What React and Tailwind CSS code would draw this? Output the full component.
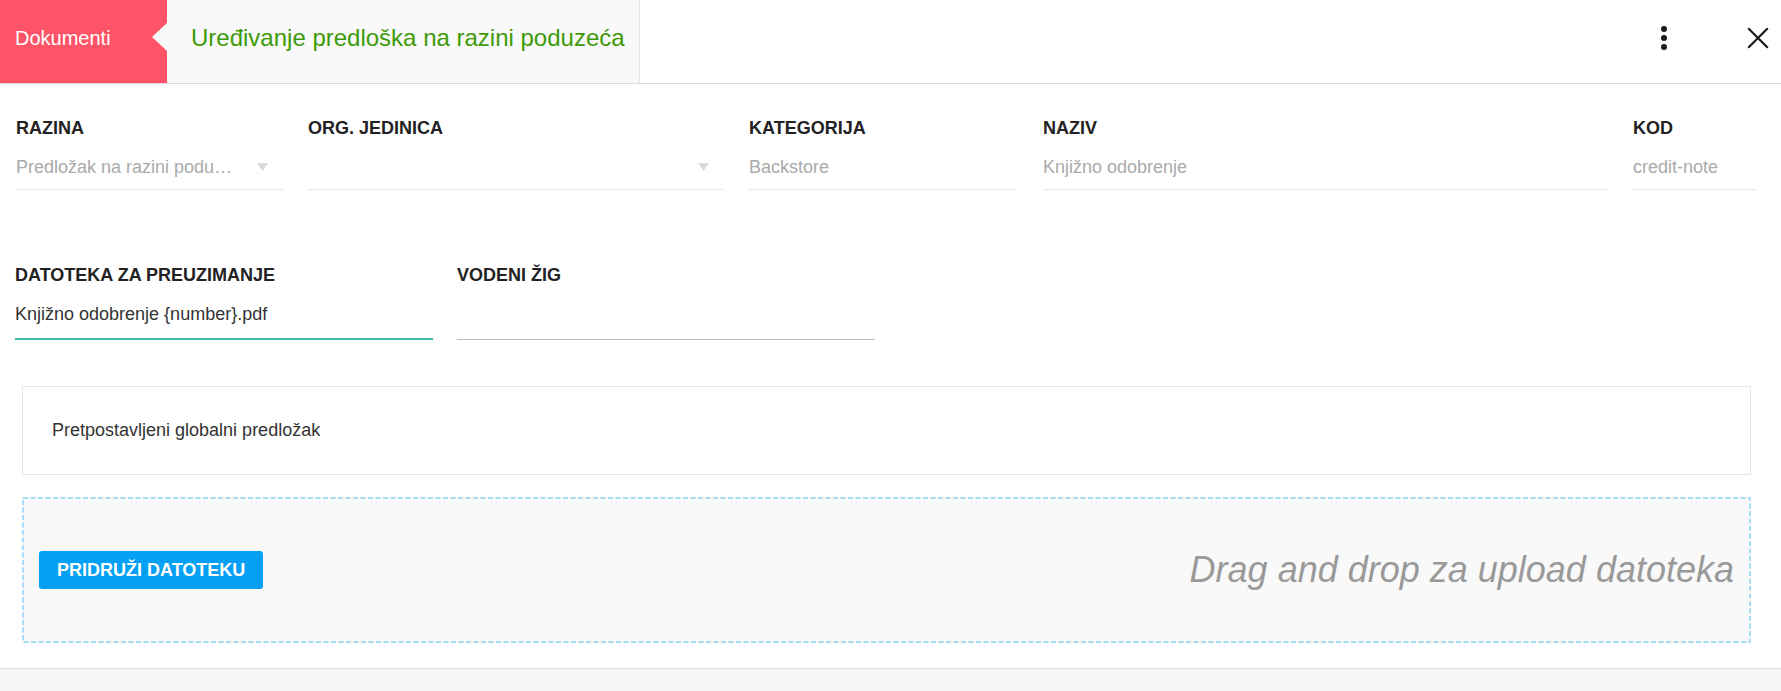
import React from 'react';

const ROW_ONE = [
  { label: 'RAZINA', value: 'Predložak na razini podu…', select: true },
  { label: 'ORG. JEDINICA', value: '', select: true },
  { label: 'KATEGORIJA', value: 'Backstore' },
  { label: 'NAZIV', value: 'Knjižno odobrenje' },
  { label: 'KOD', value: 'credit-note' },
];

function Kebab() {
  return (
    <svg width="8" height="26" viewBox="0 0 8 26">
      <circle cx="4" cy="4" r="3" fill="#1a1a1a" />
      <circle cx="4" cy="13" r="3" fill="#1a1a1a" />
      <circle cx="4" cy="22" r="3" fill="#1a1a1a" />
    </svg>
  );
}

function Close() {
  return (
    <svg width="22" height="22" viewBox="0 0 22 22">
      <path d="M2 2 L20 20 M20 2 L2 20" stroke="#1a1a1a" strokeWidth="2.2" strokeLinecap="square" />
    </svg>
  );
}

function Caret() {
  return (
    <svg width="11" height="8" viewBox="0 0 11 8">
      <polygon points="0,0 11,0 5.5,8" fill="#dadada" />
    </svg>
  );
}

export default function App() {
  return (
    <div className="w-[1781px] h-[691px] bg-white overflow-hidden flex flex-col" style={{ fontFamily: "'Liberation Sans', Arial, sans-serif" }}>

      {/* ── Zaglavlje ── */}
      <div className="h-[84px] flex items-stretch border-b border-[#dcdcdc] shrink-0">
        <div className="relative w-[167px] bg-[#ff5468] flex items-center pl-[15px] pb-[8px]">
          <span className="text-white text-[20px]">Dokumenti</span>
          <svg className="absolute right-0 top-[23px]" width="16" height="28" viewBox="0 0 16 28">
            <polygon points="16,0 1,14 16,28" fill="#f9f9f9" />
          </svg>
        </div>
        <div className="bg-[#f9f9f9] border-r border-[#e6e6e6] flex items-center pl-[24px] pr-[14px] pb-[8px]">
          <span className="text-[#3d9a08] text-[24px]">Uređivanje predloška na razini poduzeća</span>
        </div>
        <div className="flex-1" />
        <div className="flex items-center pb-[8px] gap-[79px] pr-[12px]">
          <Kebab />
          <Close />
        </div>
      </div>

      {/* ── Forma ── */}
      <div className="pt-[34px] pl-[16px]">
        <div className="grid grid-cols-[267px_416px_269px_565px_124px] gap-x-[25px]">
          {ROW_ONE.map(f => (
            <div key={f.label}>
              <div className="text-[18px] leading-[20px] font-bold text-[#222]">{f.label}</div>
              <div className="mt-[17px] pb-[10px] border-b border-dotted border-[#d4d4d4] flex items-center justify-between pr-[15px]">
                <span className="text-[18px] leading-[24px] text-[#aaa] h-[24px]">{f.value}</span>
                {f.select && <Caret />}
              </div>
            </div>
          ))}
        </div>

        <div className="grid grid-cols-[418px_418px] gap-x-[24px] mt-[75px] -ml-[1px]">
          <div>
            <div className="text-[18px] leading-[20px] font-bold text-[#222]">DATOTEKA ZA PREUZIMANJE</div>
            <div className="mt-[17px] pb-[12px] border-b-2 border-[#3fb6a8]">
              <span className="text-[18px] leading-[24px] text-[#333] block h-[24px]">Knjižno odobrenje {'{number}'}.pdf</span>
            </div>
          </div>
          <div>
            <div className="text-[18px] leading-[20px] font-bold text-[#222]">VODENI ŽIG</div>
            <div className="mt-[17px] pb-[13px] border-b border-[#bdbdbd]">
              <span className="block h-[24px]" />
            </div>
          </div>
        </div>
      </div>

      {/* ── Predložak ── */}
      <div className="ml-[22px] mr-[30px] mt-[46px] h-[89px] border border-[#e6e6e6] flex items-center pl-[29px]">
        <span className="text-[18px] text-[#333]">Pretpostavljeni globalni predložak</span>
      </div>

      {/* ── Upload ── */}
      <div className="relative ml-[22px] mr-[30px] mt-[22px] h-[146px] bg-[#f9f9f9] flex items-center justify-between pl-[17px] pr-[19px]">
        <svg className="absolute inset-0 w-full h-full pointer-events-none" preserveAspectRatio="none">
          <rect x="1" y="1" width="1727" height="144" fill="none" stroke="#a9dcf8" strokeWidth="2" strokeDasharray="5 2.5" />
        </svg>
        <button className="relative h-[38px] px-[18px] bg-[#03a0f5] rounded-[3px] text-white font-bold text-[18px]">PRIDRUŽI DATOTEKU</button>
        <span className="relative italic text-[36px] text-[#999] mr-[-2px]">Drag and drop za upload datoteka</span>
      </div>

      {/* ── Podnožje ── */}
      <div className="mt-[25px] flex-1 bg-[#f5f5f5] border-t border-[#e0e0e0]" />
    </div>
  );
}
